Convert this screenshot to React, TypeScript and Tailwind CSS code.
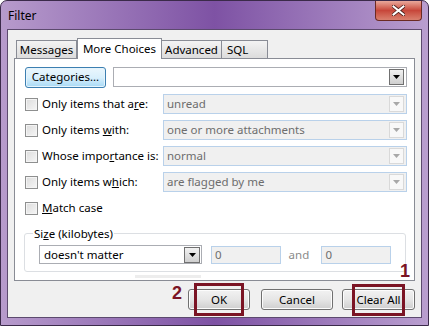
import React from 'react';

const Arrow = ({ dim }: { dim?: boolean }) => (
  <svg width="7" height="4" viewBox="0 0 7 4">
    <path d="M0 0h7L3.5 4z" fill={dim ? '#a8a8a8' : '#000'} />
  </svg>
);

const Check = () => (
  <span className="w-[13px] h-[13px] border border-[#8e8f8f] bg-gradient-to-br from-[#dcdcdc] to-[#f6f6f6] shrink-0 shadow-[inset_0_0_0_1px_#f4f4f4]" />
);

function DisabledSelect({ value }: { value: string }) {
  return (
    <div className="ml-auto w-[244px] h-[20px] border border-[#b9d1ea] bg-[#f0f0f0] flex items-center pl-[3px] pr-[2px]">
      <span className="flex-1 text-[#6d6d6d]">{value}</span>
      <span className="w-[15px] h-[16px] border border-[#d9d9d9] bg-[#f8f8f8] flex items-center justify-center">
        <Arrow dim />
      </span>
    </div>
  );
}

const rows: { label: React.ReactNode; value: string }[] = [
  { label: <>Only items that a<u>r</u>e:</>, value: 'unread' },
  { label: <>Only items <u>w</u>ith:</>, value: 'one or more attachments' },
  { label: <>Whose impo<u>r</u>tance is:</>, value: 'normal' },
  { label: <>Only items w<u>h</u>ich:</>, value: 'are flagged by me' },
];

const btn =
  'h-[21px] rounded-[3px] border border-[#707070] bg-gradient-to-b from-[#f2f2f2] via-[#e6e6e6] to-[#cfcfcf] shadow-[inset_0_0_0_1px_#fcfcfc] flex items-center justify-center';

export default function App() {
  return (
    <div
      className="relative w-[429px] h-[326px] rounded-t-[7px] border border-[#3b2a4a] bg-gradient-to-r from-[#b79bcc] via-[#7e52a4] to-[#b99ecf] text-[11.5px] text-black overflow-hidden"
      style={{ fontFamily: '"Noto Sans", "Open Sans", sans-serif' }}
    >
      {/* title bar */}
      <div className="h-[28px] flex items-start">
        <span className="ml-[7px] mt-[6px] text-[12px] text-black">Filter</span>
        <div className="ml-auto mr-[6px] w-[47px] h-[20px] rounded-b-[4px] border border-[#6b2a24] border-t-0 bg-gradient-to-b from-[#e8a89c] via-[#c7463a] to-[#d9806f] flex items-center justify-center">
          <svg width="13" height="11" viewBox="0 0 13 11">
            <path d="M1.5 1.5l10 8M11.5 1.5l-10 8" stroke="#4a1e1a" strokeWidth="3.6" strokeLinecap="square" />
            <path d="M1.5 1.5l10 8M11.5 1.5l-10 8" stroke="#fff" strokeWidth="2" strokeLinecap="square" />
          </svg>
        </div>
      </div>

      {/* client area */}
      <div className="mx-[6px] h-[289px] border border-[#5c4a6e] bg-[#f0f0f0] flex flex-col px-[6px] pt-[7px]">
        {/* tabs */}
        <div className="flex items-end h-[21px] pl-[2px] relative z-10">
          <div className="h-[18px] w-[61px] border border-[#898c95] border-b-0 bg-gradient-to-b from-[#f3f3f3] to-[#dcdcdc] flex items-center justify-center">Messages</div>
          <div className="h-[21px] w-[85px] border border-[#898c95] border-b-0 bg-white flex items-center justify-center -mb-[1px] pb-[1px]">More Choices</div>
          <div className="h-[18px] w-[60px] border border-[#898c95] border-b-0 border-l-0 bg-gradient-to-b from-[#f3f3f3] to-[#dcdcdc] flex items-center justify-center">Advanced</div>
          <div className="h-[18px] w-[46px] px-[5px] border border-[#898c95] border-b-0 border-l-0 bg-gradient-to-b from-[#f3f3f3] to-[#dcdcdc] flex items-center">SQL</div>
        </div>

        {/* panel */}
        <div className="h-[223px] border border-[#898c95] bg-white pl-[10px] pr-[7px] pt-[8px] relative">
          <div className="flex items-center gap-[7px] h-[20px]">
            <div className="w-[81px] h-[21px] rounded-[3px] border border-[#3c7fb1] bg-gradient-to-b from-[#eaf6fd] via-[#d9f0fc] to-[#a7d9f5] shadow-[inset_0_0_0_1px_#e6f4fc] flex items-center justify-center">
              Categories...
            </div>
            <div className="flex-1 h-[20px] border border-[#abadb3] bg-white flex items-center justify-end pr-[2px]">
              <span className="w-[15px] h-[16px] border border-[#707070] bg-gradient-to-b from-[#f2f2f2] to-[#cfcfcf] flex items-center justify-center">
                <Arrow />
              </span>
            </div>
          </div>

          <div className="mt-[7px] flex flex-col gap-[6px]">
            {rows.map((r, i) => (
              <div key={i} className="flex items-center h-[20px]">
                <Check />
                <span className="ml-[4px] whitespace-nowrap">{r.label}</span>
                <DisabledSelect value={r.value} />
              </div>
            ))}
            <div className="flex items-center h-[20px]">
              <Check />
              <span className="ml-[4px]"><u>M</u>atch case</span>
            </div>
          </div>

          {/* size group */}
          <div className="mt-[15px] -ml-[1px] mr-[1px] h-[39px] border border-[#dcdfe3] rounded-[3px] relative px-[14px] pt-[11px]">
            <span className="absolute -top-[9px] left-[8px] bg-white px-[1px]">Si<u>z</u>e (kilobytes)</span>
            <div className="flex items-center h-[19px]">
              <div className="w-[164px] h-[19px] border border-[#abadb3] bg-white flex items-center pl-[4px] pr-[1px]">
                <span className="flex-1">doesn't matter</span>
                <span className="w-[16px] h-[16px] border border-[#707070] bg-gradient-to-b from-[#f2f2f2] to-[#cfcfcf] flex items-center justify-center">
                  <Arrow />
                </span>
              </div>
              <div className="ml-[9px] w-[70px] h-[18px] border border-[#b9d1ea] bg-[#f0f0f0] pl-[3px] flex items-center text-[#6d6d6d]">0</div>
              <span className="ml-[8px] w-[33px] text-[#8a8a8a]">and</span>
              <div className="w-[70px] h-[18px] border border-[#b9d1ea] bg-[#f0f0f0] pl-[3px] flex items-center text-[#6d6d6d]">0</div>
            </div>
          </div>
          <div className="mt-[3px] ml-[110px] w-[66px] h-[3px] bg-[#ededed]" />
        </div>

        {/* buttons */}
        <div className="mt-[8px] flex justify-end pr-0">
          <div className={`${btn} w-[62px]`}>OK</div>
          <div className={`${btn} w-[72px] ml-[11px]`}>Cancel</div>
          <div className={`${btn} w-[73px] ml-[9px]`}>Clear All</div>
        </div>
      </div>

      {/* annotations */}
      <div className="absolute left-[193px] top-[282px] w-[50px] h-[33px] border-[3px] border-[#7b1424]" />
      <div className="absolute left-[351px] top-[283px] w-[53px] h-[32px] border-[3px] border-[#7b1424]" />
      <span className="absolute left-[171px] top-[283px] text-[18px] font-bold text-[#7b1424] leading-none" style={{ fontFamily: '"Liberation Sans", Arial, sans-serif' }}>2</span>
      <span className="absolute left-[399px] top-[261px] text-[18px] font-bold text-[#7b1424] leading-none" style={{ fontFamily: '"Liberation Sans", Arial, sans-serif' }}>1</span>
    </div>
  );
}
